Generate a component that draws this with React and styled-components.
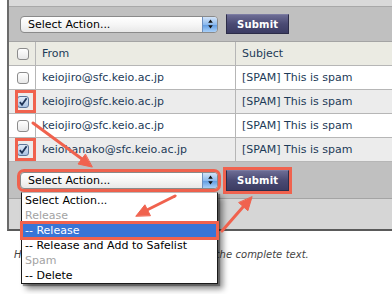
import React from 'react';
import styled, { createGlobalStyle, css } from 'styled-components';

const RED = '#f0624e';

const Global = createGlobalStyle`
  html, body { margin: 0; padding: 0; background: #fff; }
  body {
    font-family: "DejaVu Sans", Verdana, sans-serif;
    font-size: 11px;
    width: 392px;
    height: 294px;
    overflow: hidden;
  }
`;

const Page = styled.div`
  position: relative;
  width: 392px;
  height: 294px;
  overflow: hidden;
  background: #fff;
`;

const Panel = styled.div`
  margin-left: 7px;
  border-left: 2px solid #6b6b6b;
  border-bottom: 2px solid #5a5a5a;
  display: flex;
  flex-direction: column;
`;

const TopStrip = styled.div`
  height: 7px;
  box-sizing: border-box;
  background: #d9d9d9;
  border-bottom: 1px solid #a8a8a8;
`;

const Toolbar = styled.div`
  height: ${(p) => p.$h}px;
  box-sizing: border-box;
  background: #c0c0c0;
  border-bottom: 1px solid #a4a4a4;
  display: flex;
  align-items: center;
  gap: 8px;
  padding-left: 11px;
`;

const SelectBox = styled.div`
  position: relative;
  width: 198px;
  height: 17px;
  box-sizing: border-box;
  border: 1px solid #8a8a8a;
  border-radius: 4px;
  background: linear-gradient(#ffffff, #f6f6f6 50%, #e8e8e8);
  display: flex;
  align-items: stretch;
  ${(p) =>
    p.$marked &&
    css`
      outline: 3px solid ${RED};
      outline-offset: 0;
    `}
`;

const SelectText = styled.span`
  flex: 1;
  padding-left: 7px;
  font-size: 11px;
  line-height: 15px;
  color: #000;
`;

const Stepper = styled.span`
  width: 14px;
  border-left: 1px solid #6d8fbf;
  border-radius: 0 3px 3px 0;
  background: linear-gradient(#d3e4f8, #8dbaee 50%, #5f9be2 52%, #a9d0f8);
  display: flex;
  align-items: center;
  justify-content: center;
`;

const SubmitButton = styled.button`
  height: ${(p) => p.$h}px;
  padding: 0 10px;
  margin: 0;
  border: 1px solid #2c2c48;
  border-top-color: #7c7ca2;
  background: linear-gradient(#6c6c94, #4a4a73 50%, #3c3c63);
  color: #fff;
  font-family: "DejaVu Sans", Verdana, sans-serif;
  font-size: 10px;
  font-weight: bold;
  letter-spacing: 0.2px;
  ${(p) =>
    p.$marked &&
    css`
      outline: 3px solid ${RED};
      outline-offset: 0;
    `}
`;

const Table = styled.div`
  display: flex;
  flex-direction: column;
`;

const Row = styled.div`
  display: grid;
  grid-template-columns: 27px 200px 1fr;
  height: 24px;
  box-sizing: border-box;
  border-bottom: 1px solid #b6b6b6;
  background: ${(p) => (p.$head ? '#ebebe3' : p.$alt ? '#ececec' : '#ffffff')};
`;

const Cell = styled.div`
  display: flex;
  align-items: center;
  padding-left: 6px;
  border-right: 1px solid #b6b6b6;
  color: #1d3b58;
  font-size: 11px;
  white-space: nowrap;
  overflow: hidden;
  &:last-child {
    border-right: 0;
  }
`;

const CheckCell = styled.div`
  position: relative;
  display: flex;
  align-items: center;
  padding-left: 8px;
  border-right: 1px solid #b6b6b6;
  ${(p) =>
    p.$marked &&
    css`
      &::after {
        content: '';
        position: absolute;
        left: 6px;
        right: -1px;
        top: 0;
        bottom: 0;
        border: 3px solid ${RED};
      }
    `}
`;

const Box = styled.span`
  width: 12px;
  height: 12px;
  box-sizing: border-box;
  border-radius: 3px;
  border: 1px solid ${(p) => (p.$checked ? '#5a759a' : '#8c8c8c')};
  background: ${(p) =>
    p.$checked ? 'linear-gradient(#dfeaf7, #aac3e3)' : 'linear-gradient(#ffffff, #e8e8e8)'};
  display: flex;
  align-items: center;
  justify-content: center;
`;

const Footer = styled.div`
  height: 30px;
  background: #d6d6d6;
`;

const Note = styled.p`
  margin: 17px 0 0 14px;
  font-size: 10px;
  line-height: 14px;
  font-style: italic;
  word-spacing: 0.3px;
  color: #444;
  white-space: nowrap;
`;

const Menu = styled.div`
  position: absolute;
  left: 0;
  top: 19px;
  width: 197px;
  box-sizing: border-box;
  border: 1px solid #1a1a1a;
  border-top-color: #bbb;
  background: #fff;
  box-shadow: 2px 2px 1px rgba(0, 0, 0, 0.35), 5px 5px 6px rgba(0, 0, 0, 0.45);
  z-index: 5;
`;

const MenuItem = styled.div`
  height: 15px;
  line-height: 15px;
  padding-left: 3px;
  font-size: 11px;
  color: ${(p) => (p.$group ? '#a3a3a3' : '#000')};
  white-space: nowrap;
  ${(p) =>
    p.$active &&
    css`
      background: #3875d7;
      color: #fff;
      outline: 3px solid ${RED};
      outline-offset: -1px;
    `}
`;

const Overlay = styled.svg`
  position: absolute;
  left: 0;
  top: 0;
  pointer-events: none;
  z-index: 10;
`;

const Arrows = () => (
  <Overlay width="392" height="294" viewBox="0 0 392 294">
    <g stroke={RED} strokeWidth="3" strokeLinecap="round" fill={RED}>
      <line x1="33" y1="123" x2="82" y2="159" />
      <polygon points="92,167 78,164 85.2,154.4" strokeWidth="1" strokeLinejoin="round" />
      <line x1="175" y1="196" x2="147" y2="210" />
      <polygon points="136,216 144.9,204.8 150.3,215.4" strokeWidth="1" strokeLinejoin="round" />
      <line x1="222" y1="231" x2="243" y2="207" />
      <polygon points="252,197 247.9,210.7 238.9,202.8" strokeWidth="1" strokeLinejoin="round" />
    </g>
  </Overlay>
);

const StepIcon = () => (
  <svg width="5" height="10" viewBox="0 0 5 10">
    <path d="M2.5 0.5 L4.8 3.8 L0.2 3.8 Z" fill="#111" />
    <path d="M2.5 9.5 L4.8 6.2 L0.2 6.2 Z" fill="#111" />
  </svg>
);

const Check = ({ checked }) => (
  <Box $checked={checked}>
    {checked && (
      <svg width="10" height="10" viewBox="0 0 10 10">
        <path d="M1.8 5.2 L4 7.8 L8.6 1.2" stroke="#1f3558" strokeWidth="1.8" fill="none" />
      </svg>
    )}
  </Box>
);

const Select = ({ marked, children }) => (
  <SelectBox $marked={marked}>
    <SelectText>Select Action...</SelectText>
    <Stepper>
      <StepIcon />
    </Stepper>
    {children}
  </SelectBox>
);

const rows = [
  { from: 'keiojiro@sfc.keio.ac.jp', checked: false },
  { from: 'keiojiro@sfc.keio.ac.jp', checked: true },
  { from: 'keiojiro@sfc.keio.ac.jp', checked: false },
  { from: 'keiohanako@sfc.keio.ac.jp', checked: true },
];

const options = [
  { label: 'Select Action...' },
  { label: 'Release', group: true },
  { label: '-- Release', active: true },
  { label: '-- Release and Add to Safelist' },
  { label: 'Spam', group: true },
  { label: '-- Delete' },
];

export default function App() {
  return (
    <Page>
      <Global />
      <Panel>
        <TopStrip />
        <Toolbar $h={35}>
          <Select />
          <SubmitButton $h={20}>Submit</SubmitButton>
        </Toolbar>
        <Table>
          <Row $head>
            <CheckCell>
              <Check />
            </CheckCell>
            <Cell>From</Cell>
            <Cell>Subject</Cell>
          </Row>
          {rows.map((r, i) => (
            <Row key={i} $alt={i % 2 === 1}>
              <CheckCell $marked={r.checked}>
                <Check checked={r.checked} />
              </CheckCell>
              <Cell>{r.from}</Cell>
              <Cell>[SPAM] This is spam</Cell>
            </Row>
          ))}
        </Table>
        <Toolbar $h={37}>
          <Select marked>
            <Menu>
              {options.map((o, i) => (
                <MenuItem key={i} $group={o.group} $active={o.active}>
                  {o.label}
                </MenuItem>
              ))}
            </Menu>
          </Select>
          <SubmitButton $h={21} $marked>
            Submit
          </SubmitButton>
        </Toolbar>
        <Footer />
      </Panel>
      <Note>Hover over the message subject to see the complete text.</Note>
      <Arrows />
    </Page>
  );
}
